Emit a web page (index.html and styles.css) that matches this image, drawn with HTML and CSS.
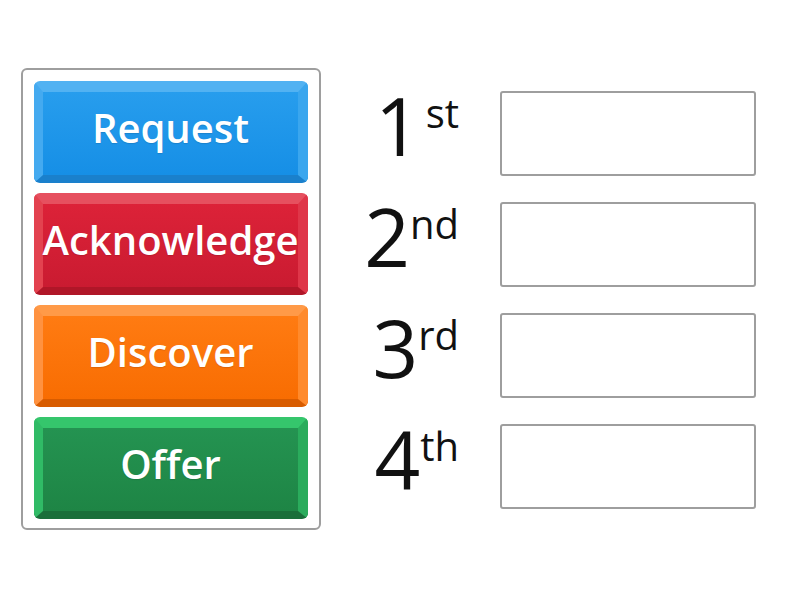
FILE: index.html
```html
<!DOCTYPE html>
<html>
<head>
<meta charset="utf-8">
<link rel="stylesheet" href="styles.css">
</head>
<body>
<div class="page">
  <div class="bank">
    <div class="tile tile-blue">Request</div>
    <div class="tile tile-red">Acknowledge</div>
    <div class="tile tile-orange">Discover</div>
    <div class="tile tile-green">Offer</div>
  </div>
  <div class="slots">
    <div class="label"><span class="num">1</span><span class="suf suf-st">st</span></div>
    <div class="box"></div>
    <div class="label"><span class="num">2</span><span class="suf">nd</span></div>
    <div class="box"></div>
    <div class="label"><span class="num">3</span><span class="suf">rd</span></div>
    <div class="box"></div>
    <div class="label"><span class="num">4</span><span class="suf">th</span></div>
    <div class="box"></div>
  </div>
</div>
</body>
</html>
```
FILE: styles.css
```css
* { box-sizing: border-box; }
html, body { margin: 0; padding: 0; background: #fff; }
body { font-family: "Open Sans", "Noto Sans", sans-serif; }

.page {
  display: flex;
  align-items: flex-start;
  padding: 68px 0 0 21px;
}

.bank {
  width: 300px;
  height: 462px;
  border: 2px solid #9e9e9e;
  border-radius: 6px;
  padding: 11px 11px 9px 11px;
  display: flex;
  flex-direction: column;
  gap: 10px;
}

.tile {
  height: 102px;
  border-radius: 6px;
  border-style: solid;
  border-width: 11px 10px 8px 9px;
  display: flex;
  align-items: center;
  justify-content: center;
  padding-bottom: 13px;
  color: #fff;
  font-size: 40px;
  font-weight: 600;
  white-space: nowrap;
  text-shadow: 0 1px 1px rgba(0,0,0,0.12);
}

.tile-blue {
  background: linear-gradient(#279ded, #168fe6);
  border-color: #52b2f2 #3aa6ee #1a80cc #44aaf0;
}
.tile-red {
  background: linear-gradient(#dc2238, #ca1b31);
  border-color: #e6505f #df3649 #b01628 #e3424f;
}
.tile-orange {
  background: linear-gradient(#ff7b12, #f86d02);
  border-color: #ff9a48 #ff8a2c #d85c00 #ff9240;
}
.tile-green {
  background: linear-gradient(#249351, #1e8545);
  border-color: #35c66c #2aac5c #1a6e3a #30bb66;
}

.slots {
  margin-top: 14px;
  margin-left: 24px;
  display: grid;
  grid-template-columns: 140px 256px;
  grid-auto-rows: 102px;
  column-gap: 15px;
  row-gap: 9px;
  align-items: center;
}

.label {
  align-self: start;
  display: flex;
  justify-content: flex-end;
  align-items: baseline;
  padding-right: 26px;
  color: #111;
  line-height: 1;
  margin-top: 3px;
}
.num { font-size: 80px; }
.suf {
  font-size: 40px;
  position: relative;
  top: -28px;
}
.suf-st { margin-left: 5px; }

.box {
  height: 85px;
  border: 2px solid #9e9e9e;
  border-radius: 3px;
  background: #fff;
}
```
